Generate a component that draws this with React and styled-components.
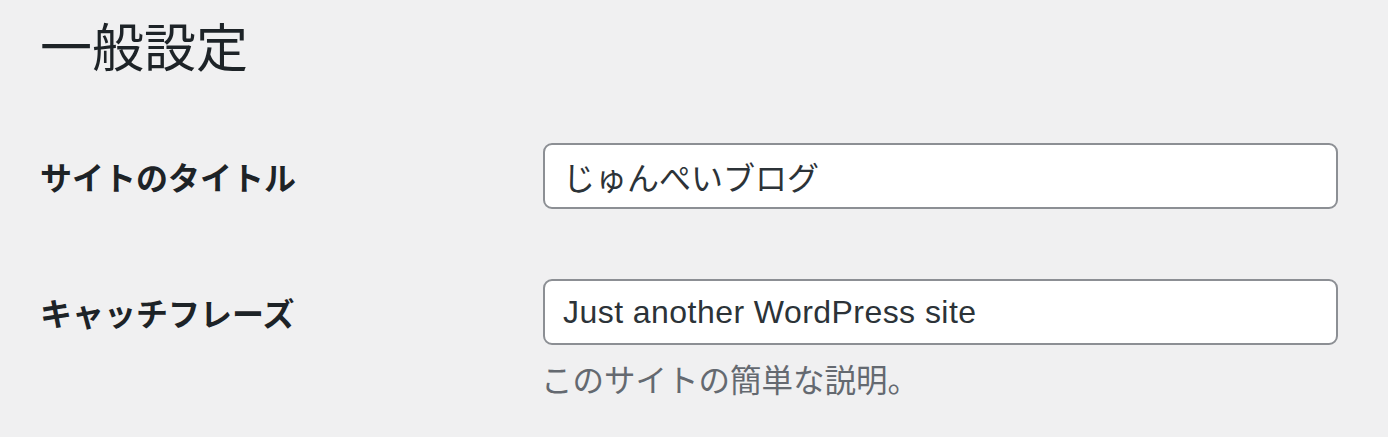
import React from "react";
import styled, { createGlobalStyle } from "styled-components";

const Global = createGlobalStyle`
  html, body { margin: 0; padding: 0; background: #f0f0f1; }
  body {
    font-family: "Liberation Sans", "Noto Sans CJK JP", sans-serif;
    color: #1d2327;
  }
`;

const Page = styled.div`
  width: 1388px;
  height: 437px;
  box-sizing: border-box;
  padding: 0 40px;
  overflow: hidden;
`;

const Heading = styled.h1`
  margin: 0;
  padding-top: 15px;
  font-size: 52px;
  line-height: 60px;
  font-weight: 400;
  color: #1d2327;
  font-family: "Noto Sans CJK JP", sans-serif;
`;

const Form = styled.div`
  display: grid;
  grid-template-columns: 503px 795px;
  row-gap: 70px;
  margin-top: 68px;
`;

const Label = styled.label`
  display: flex;
  align-items: center;
  height: 66px;
  font-family: "Noto Sans CJK JP", sans-serif;
  font-weight: 700;
  font-size: 32px;
  color: #1d2327;
`;

const Field = styled.div`
  display: flex;
  flex-direction: column;
`;

const Input = styled.input`
  box-sizing: border-box;
  width: 795px;
  height: 66px;
  padding: 0 18px;
  border: 2px solid #8c8f94;
  border-radius: 9px;
  background: #fff;
  font-family: "Liberation Sans", "Noto Sans CJK JP", sans-serif;
  font-size: 32px;
  letter-spacing: ${(p) => p.$tracking || 0}px;
  color: #2c3338;
  outline: none;
`;

const Description = styled.p`
  margin: 13px 0 0 -2px;
  font-family: "Noto Sans CJK JP", sans-serif;
  font-size: 31.5px;
  line-height: 40px;
  color: #646970;
`;

export default function App() {
  return (
    <Page>
      <Global />
      <Heading>一般設定</Heading>
      <Form>
        <Label htmlFor="blogname">サイトのタイトル</Label>
        <Field>
          <Input id="blogname" defaultValue="じゅんぺいブログ" />
        </Field>
        <Label htmlFor="blogdescription">キャッチフレーズ</Label>
        <Field>
          <Input id="blogdescription" $tracking={0.45} defaultValue="Just another WordPress site" />
          <Description>このサイトの簡単な説明。</Description>
        </Field>
      </Form>
    </Page>
  );
}
